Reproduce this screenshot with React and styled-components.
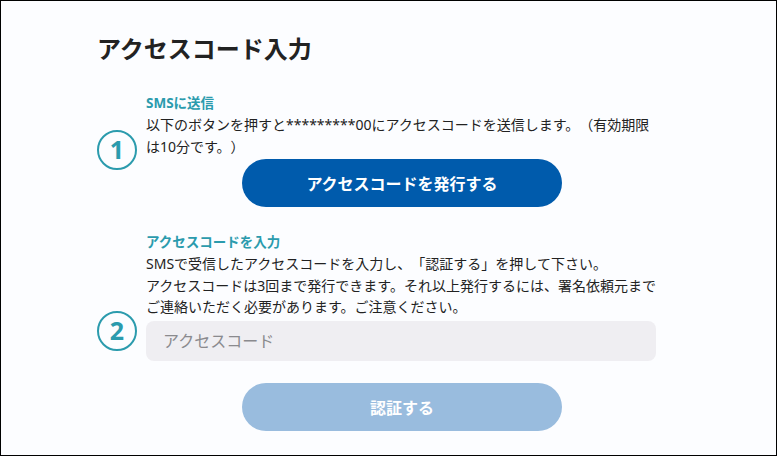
import React, { useState } from "react";
import styled, { createGlobalStyle } from "styled-components";

const GlobalStyle = createGlobalStyle`
  body {
    margin: 0;
    background: #fff;
    font-family: "Noto Sans", "Noto Sans CJK JP", sans-serif;
    color: #222;
    text-spacing-trim: space-all;
  }
`;

const Frame = styled.div`
  box-sizing: border-box;
  width: 777px;
  height: 456px;
  border: 1px solid #000;
  background: #fcfdff;
  padding: 33px 0 0 96px;
`;

const Title = styled.h1`
  margin: 0;
  font-size: 24px;
  line-height: 30px;
  font-weight: 700;
  color: #222;
`;

const Step = styled.section`
  display: grid;
  grid-template-columns: 40px 512px;
  column-gap: 9px;
  margin-top: ${(p) => p.$top}px;
`;

const Circle = styled.div`
  box-sizing: border-box;
  width: 40px;
  height: 40px;
  border: 2px solid #2b9bad;
  border-radius: 50%;
  display: flex;
  align-items: center;
  justify-content: center;
  color: #2b9bad;
  font-size: 25px;
  font-weight: 700;
  line-height: 1;
  align-self: center;
`;

const Body = styled.div`
  display: flex;
  flex-direction: column;
`;

const Label = styled.div`
  font-size: 13.5px;
  line-height: 22px;
  font-weight: 700;
  color: #2b9bad;
`;

const Text = styled.p`
  margin: 0;
  font-size: 14px;
  line-height: 21.5px;
  color: #222;
  text-spacing-trim: space-all;
`;

const Button = styled.button`
  align-self: center;
  width: 320px;
  height: 48px;
  margin-top: ${(p) => p.$top}px;
  border: 0;
  border-radius: 24px;
  background: ${(p) => (p.disabled ? "#99bcde" : "#005bac")};
  color: #fff;
  font-family: inherit;
  font-size: 16px;
  font-weight: 700;
  cursor: ${(p) => (p.disabled ? "default" : "pointer")};
`;

const Input = styled.input`
  box-sizing: border-box;
  width: 510px;
  height: 40px;
  margin-top: 3px;
  border: 0;
  border-radius: 8px;
  background: #efeef2;
  padding: 0 17px;
  font-family: inherit;
  font-size: 16px;
  color: #222;
  outline: none;

  &::placeholder {
    color: #8a8a8e;
  }
`;

export default function App() {
  const [code, setCode] = useState("");

  return (
    <>
      <GlobalStyle />
      <Frame>
        <Title>アクセスコード入力</Title>

        <Step $top={28}>
          <Circle>1</Circle>
          <Body>
            <Label>SMSに送信</Label>
            <Text>
              以下のボタンを押すと*********00にアクセスコードを送信します。（有効期限
              <br />
              は10分です。）
            </Text>
            <Button $top={2}>アクセスコードを発行する</Button>
          </Body>
        </Step>

        <Step $top={24}>
          <Circle>2</Circle>
          <Body>
            <Label>アクセスコードを入力</Label>
            <Text>
              SMSで受信したアクセスコードを入力し、「認証する」を押して下さい。
              <br />
              アクセスコードは3回まで発行できます。それ以上発行するには、署名依頼元までご連絡いただく必要があります。ご注意ください。
            </Text>
            <Input
              placeholder="アクセスコード"
              value={code}
              onChange={(e) => setCode(e.target.value)}
            />
            <Button $top={22} disabled={code.length === 0}>
              認証する
            </Button>
          </Body>
        </Step>
      </Frame>
    </>
  );
}
